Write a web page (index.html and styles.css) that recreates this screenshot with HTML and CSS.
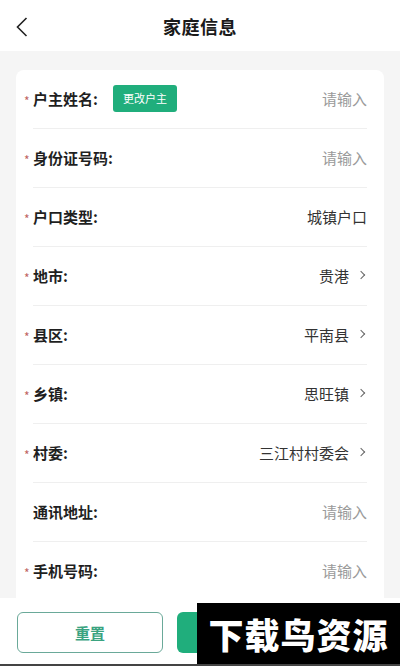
FILE: index.html
```html
<html>
<head>
    <meta charset="UTF-8">
    <title>家庭信息</title>
    <link rel="stylesheet" href="styles.css">
</head>
<body>
    <div class="page">
        <div class="header">
            <span class="back">
                <svg width="12" height="20" viewBox="0 0 12 20"><path d="M10.5 1 L1.5 10 L10.5 19" fill="none" stroke="#222" stroke-width="1.6"/></svg>
            </span>
            <h1>家庭信息</h1>
        </div>
        <div class="main">
            <div class="card">
                <div class="row">
                    <span class="label"><i class="req">*</i>户主姓名:</span>
                    <button class="change-btn">更改户主</button>
                    <span class="value placeholder">请输入</span>
                </div>
                <div class="row">
                    <span class="label"><i class="req">*</i>身份证号码:</span>
                    <span class="value placeholder">请输入</span>
                </div>
                <div class="row">
                    <span class="label"><i class="req">*</i>户口类型:</span>
                    <span class="value">城镇户口</span>
                </div>
                <div class="row">
                    <span class="label"><i class="req">*</i>地市:</span>
                    <span class="value">贵港<em class="arrow"></em></span>
                </div>
                <div class="row">
                    <span class="label"><i class="req">*</i>县区:</span>
                    <span class="value">平南县<em class="arrow"></em></span>
                </div>
                <div class="row">
                    <span class="label"><i class="req">*</i>乡镇:</span>
                    <span class="value">思旺镇<em class="arrow"></em></span>
                </div>
                <div class="row">
                    <span class="label"><i class="req">*</i>村委:</span>
                    <span class="value">三江村村委会<em class="arrow"></em></span>
                </div>
                <div class="row">
                    <span class="label"><i class="req hidden">*</i>通讯地址:</span>
                    <span class="value placeholder">请输入</span>
                </div>
                <div class="row last">
                    <span class="label"><i class="req">*</i>手机号码:</span>
                    <span class="value placeholder">请输入</span>
                </div>
            </div>
        </div>
        <div class="footer">
            <button class="btn btn-reset">重置</button>
            <button class="btn btn-submit"></button>
            <div class="watermark">下载鸟资源</div>
        </div>
    </div>
</body>
</html>
```

FILE: styles.css
```css
* {
    box-sizing: border-box;
}
html, body {
    margin: 0;
    padding: 0;
}
body {
    font-family: "Noto Sans CJK SC", "Noto Sans", sans-serif;
    background: #f5f5f5;
    color: #222;
}
.page {
    width: 400px;
    height: 666px;
    display: flex;
    flex-direction: column;
    overflow: hidden;
    border-bottom: 2px solid #444;
}
.header {
    height: 51px;
    background: #fff;
    display: flex;
    align-items: center;
    justify-content: center;
    position: relative;
}
.back {
    position: absolute;
    left: 16px;
    top: 17px;
    height: 20px;
}
h1 {
    margin: 0;
    font-size: 18px;
    font-weight: bold;
    color: #1a1a1a;
    letter-spacing: 0.5px;
}
.main {
    flex: 1;
    padding: 19px 16px 0;
    overflow: hidden;
}
.card {
    background: #fff;
    border-radius: 8px 8px 0 0;
    padding: 0 17px;
    height: 100%;
}
.row {
    height: 59px;
    display: flex;
    align-items: center;
    border-bottom: 1px solid #efefef;
    padding-bottom: 2px;
}
.row.last {
    border-bottom: none;
}
.label {
    font-size: 15px;
    font-weight: bold;
    color: #1f1f1f;
    position: relative;
}
.req {
    position: absolute;
    left: -9px;
    top: 4px;
    font-style: normal;
    color: #c0635f;
    font-size: 12px;
    font-weight: normal;
}
.req.hidden {
    display: none;
}
.change-btn {
    margin-left: 15px;
    background: #20ae7c;
    color: #fff;
    border: none;
    border-radius: 3px;
    font-size: 11px;
    font-family: inherit;
    width: 64px;
    height: 27px;
    padding: 0;
}
.value {
    margin-left: auto;
    font-size: 15px;
    color: #333;
    display: flex;
    align-items: center;
}
.value.placeholder {
    color: #9a9a9a;
}
.arrow {
    display: inline-block;
    width: 6px;
    height: 6px;
    border-top: 1.2px solid #666;
    border-right: 1.2px solid #666;
    transform: rotate(45deg);
    margin-left: 9px;
    margin-right: 3px;
}
.footer {
    height: 66px;
    background: #fff;
    display: flex;
    gap: 14px;
    padding: 14px 17px 0;
    position: relative;
}
.btn {
    width: 146px;
    height: 41px;
    border-radius: 6px;
    font-size: 15px;
    font-weight: bold;
    font-family: inherit;
}
.btn-reset {
    background: #fff;
    border: 1.5px solid #6aa999;
    color: #3aa380;
}
.btn-submit {
    background: #20ae7c;
    border: none;
    color: #fff;
}
.watermark {
    position: absolute;
    left: 197px;
    top: 5px;
    width: 203px;
    height: 61px;
    background: #000;
    color: #fff;
    font-size: 35px;
    font-weight: 900;
    letter-spacing: 1px;
    display: flex;
    align-items: center;
    justify-content: center;
}
```
